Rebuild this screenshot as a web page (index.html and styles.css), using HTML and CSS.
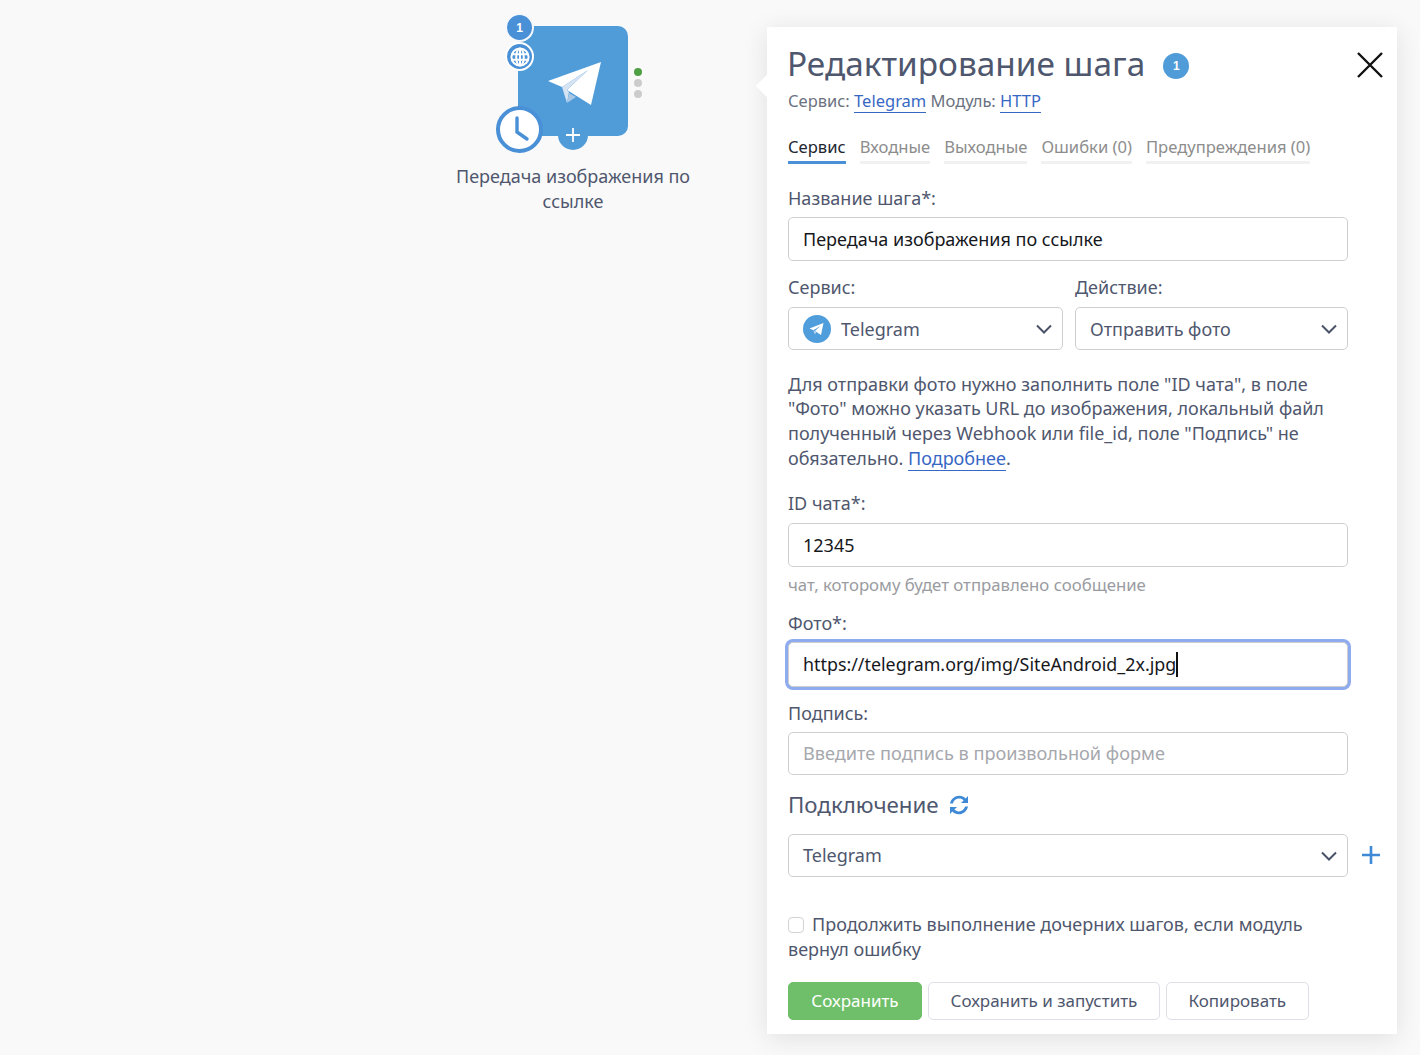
FILE: index.html
```html
<!DOCTYPE html>
<html lang="ru">

<head>
    <meta charset="utf-8">
    <meta name="viewport" content="width=device-width, initial-scale=1.0">
    <title>Редактирование шага</title>
    <link rel="stylesheet" href="styles.css">
</head>

<body>
    <!-- шаг на холсте -->
    <div class="node">
        <div class="node-box">
            <svg class="plane" viewBox="0 0 54 44">
                <path d="M53 0 L0 19 L14 25 L40 8 L19 28 L43 43 Z" fill="#fff" />
                <path d="M40 8 L14 25 L19 41 L21 30 L19 28 Z" fill="#d5e3f3" />
                <path d="M19 41 L21 31 L28 35 Z" fill="#a9c8e6" />
            </svg>
        </div>
        <span class="node-num">1</span>
        <span class="node-globe">
            <svg viewBox="0 0 20 20" width="20" height="20" fill="none" stroke="#fff" stroke-width="2">
                <circle cx="10" cy="10" r="8.6" />
                <ellipse cx="10" cy="10" rx="3.8" ry="8.6" />
                <path d="M10 1.4V18.6M1.8 7.2H18.2M1.8 12.8H18.2" />
            </svg>
        </span>
        <span class="node-clock">
            <svg viewBox="0 0 30 30" width="30" height="30" fill="none" stroke="#4a90d6" stroke-width="3.4" stroke-linecap="round">
                <path d="M12 3V17L22 24" />
            </svg>
        </span>
        <span class="node-add">
            <svg viewBox="0 0 14 14" width="14" height="14" stroke="#fff" stroke-width="1.8">
                <path d="M7 0V14M0 7H14" />
            </svg>
        </span>
        <div class="dots">
            <i class="dot green"></i>
            <i class="dot"></i>
            <i class="dot"></i>
        </div>
        <p class="node-name">Передача изображения по ссылке</p>
    </div>

    <!-- панель редактирования -->
    <aside class="panel">
        <span class="arrow"></span>
        <button class="close" aria-label="Закрыть">
            <svg viewBox="0 0 26 26" width="26" height="26" stroke="#111" stroke-width="2.4">
                <path d="M1 1L25 25M25 1L1 25" />
            </svg>
        </button>

        <h1>Редактирование шага <span class="badge">1</span></h1>
        <p class="sub">Сервис: <a href="#">Telegram</a> Модуль: <a href="#">HTTP</a></p>

        <nav class="tabs">
            <span class="tab active">Сервис</span>
            <span class="tab">Входные</span>
            <span class="tab">Выходные</span>
            <span class="tab">Ошибки (0)</span>
            <span class="tab">Предупреждения (0)</span>
        </nav>

        <label class="label first">Название шага*:</label>
        <div class="field dark">Передача изображения по ссылке</div>

        <div class="cols">
            <div class="col-left">
                <label class="label">Сервис:</label>
                <div class="field select">
                    <svg class="tg" viewBox="0 0 28 28" width="28" height="28">
                        <circle cx="14" cy="14" r="14" fill="#4f9ddb" />
                        <path d="M20.5 8 L6.5 13.5 L10.5 15.2 L17.5 10.7 L12 16 L18 20 Z" fill="#fff" />
                        <path d="M10.5 15.2 L12 19.5 L13 17 Z" fill="#d5e3f3" />
                    </svg>
                    Telegram
                    <svg class="chevron" viewBox="0 0 16 10" width="16" height="10" fill="none" stroke="#4a5368" stroke-width="2">
                        <path d="M1 1.5L8 8.5L15 1.5" />
                    </svg>
                </div>
            </div>
            <div class="col-right">
                <label class="label">Действие:</label>
                <div class="field select">
                    Отправить фото
                    <svg class="chevron" viewBox="0 0 16 10" width="16" height="10" fill="none" stroke="#4a5368" stroke-width="2">
                        <path d="M1 1.5L8 8.5L15 1.5" />
                    </svg>
                </div>
            </div>
        </div>

        <p class="descr">Для отправки фото нужно заполнить поле "ID чата", в поле "Фото" можно указать URL до изображения, локальный файл полученный через Webhook или file_id, поле "Подпись" не обязательно. <a href="#">Подробнее</a>.</p>

        <label class="label chat">ID чата*:</label>
        <div class="field dark">12345</div>
        <p class="hint">чат, которому будет отправлено сообщение</p>

        <label class="label photo">Фото*:</label>
        <div class="field dark focus">https://telegram.org/img/SiteAndroid_2x.jpg<span class="caret"></span></div>

        <label class="label sign">Подпись:</label>
        <div class="field placeholder">Введите подпись в произвольной форме</div>

        <h2>Подключение
            <svg viewBox="0 0 22 22" width="22" height="22" fill="#3f8ad6">
                <path d="M2 9.5C3 4.8 6.8 1.7 11.2 1.7c2.6 0 4.8 1 6.5 2.7L20 2v7h-7l2.6-2.6c-1.2-1.2-2.7-1.8-4.4-1.8-3 0-5.5 1.9-6.3 4.9z" />
                <path d="M20 12.5c-1 4.7-4.8 7.8-9.2 7.8-2.6 0-4.8-1-6.5-2.7L2 20v-7h7l-2.6 2.6c1.2 1.2 2.7 1.8 4.4 1.8 3 0 5.5-1.9 6.3-4.9z" />
            </svg>
        </h2>
        <div class="conn">
            <div class="field select">
                Telegram
                <svg class="chevron" viewBox="0 0 16 10" width="16" height="10" fill="none" stroke="#4a5368" stroke-width="2">
                    <path d="M1 1.5L8 8.5L15 1.5" />
                </svg>
            </div>
            <svg class="conn-add" viewBox="0 0 18 18" width="18" height="18" stroke="#3f8ad6" stroke-width="2.6">
                <path d="M9 0V18M0 9H18" />
            </svg>
        </div>

        <p class="check"><span class="box"></span>Продолжить выполнение дочерних шагов, если модуль вернул ошибку</p>

        <div class="buttons">
            <button class="btn green-btn">Сохранить</button>
            <button class="btn">Сохранить и запустить</button>
            <button class="btn">Копировать</button>
        </div>
    </aside>
</body>

</html>
```

FILE: styles.css
```css
* {
    margin: 0;
    padding: 0;
    box-sizing: border-box;
}

html,
body {
    height: 1055px;
    overflow: hidden;
}

body {
    position: relative;
    background-color: #f9f9f9;
    font-family: "Noto Sans", sans-serif;
    font-size: 18px;
    color: #4f576e;
}

a {
    color: #3767c4;
    text-decoration: none;
    border-bottom: 1px solid #3767c4;
}

/* шаг на холсте */
.node {
    position: absolute;
    left: 448px;
    top: 0;
    width: 250px;
    height: 220px;
}

.node-box {
    position: absolute;
    left: 70px;
    top: 26px;
    width: 110px;
    height: 110px;
    background-color: #4f9cd9;
    border-radius: 10px;
}

.plane {
    position: absolute;
    left: 30px;
    top: 36px;
    width: 54px;
    height: 44px;
}

.node-num,
.node-globe,
.node-clock,
.node-add {
    position: absolute;
    display: flex;
    align-items: center;
    justify-content: center;
    border-radius: 50%;
}

.node-num {
    left: 57px;
    top: 13px;
    width: 29px;
    height: 29px;
    background-color: #4a90d6;
    border: 2px solid #f6f8fb;
    color: #fff;
    font: bold 12px "Liberation Sans", sans-serif;
}

.node-globe {
    left: 57px;
    top: 42px;
    width: 29px;
    height: 29px;
    background-color: #4a90d6;
    border: 2px solid #fff;
}

.node-clock {
    left: 48px;
    top: 106px;
    width: 47px;
    height: 47px;
    background-color: #fff;
    border: 4px solid #4a90d6;
}

.node-add {
    left: 110px;
    top: 120px;
    width: 30px;
    height: 30px;
    background-color: #4f9cd9;
}

.dots {
    position: absolute;
    left: 186px;
    top: 68px;
    display: flex;
    flex-direction: column;
    gap: 3px;
}

.dot {
    width: 8px;
    height: 8px;
    border-radius: 50%;
    background-color: #cccccc;
}

.dot.green {
    background-color: #4f9f45;
}

.node-name {
    position: absolute;
    left: 0;
    top: 164px;
    width: 250px;
    text-align: center;
    line-height: 24.7px;
}

/* панель */
.panel {
    position: absolute;
    left: 767px;
    top: 27px;
    width: 630px;
    height: 1007px;
    padding: 14px 0 0 21px;
    background-color: #fff;
    box-shadow: 0 4px 24px rgba(0, 0, 0, 0.1);
}

.arrow {
    position: absolute;
    left: -8px;
    top: 51px;
    width: 16px;
    height: 16px;
    background-color: #fff;
    transform: rotate(45deg);
}

.close {
    position: absolute;
    left: 590px;
    top: 25px;
    width: 26px;
    height: 26px;
    background: none;
    border: 0;
}

h1 {
    display: flex;
    align-items: center;
    margin-left: -1px;
    font-size: 33.4px;
    font-weight: 400;
    line-height: 44px;
}

.badge {
    display: flex;
    align-items: center;
    justify-content: center;
    width: 26px;
    height: 26px;
    margin: 6px 0 0 18px;
    border-radius: 50%;
    background-color: #4f9cd9;
    color: #fff;
    font: bold 12px "Liberation Sans", sans-serif;
}

.sub {
    margin-top: 4px;
    font-size: 16.5px;
    line-height: 24px;
    color: #6b7280;
}

.tabs {
    display: flex;
    gap: 14px;
    margin-top: 21px;
}

.tab {
    height: 30px;
    padding-top: 1px;
    border-bottom: 3px solid #f1f1f1;
    font-size: 16.6px;
    line-height: 24px;
    color: #8d8d8d;
}

.tab.active {
    border-bottom-color: #4a90d6;
    color: #22262e;
}

.label {
    display: block;
    height: 24px;
    margin: 14px 0 8px;
    line-height: 24px;
}

.label.first {
    margin-top: 22px;
    margin-bottom: 7px;
}

.label.chat {
    margin-top: 20.5px;
    margin-bottom: 8px;
}

.label.photo {
    margin-top: 14px;
    margin-bottom: 7px;
}

.label.sign {
    margin-top: 14px;
    margin-bottom: 7px;
}

.field {
    display: flex;
    align-items: center;
    width: 560px;
    height: 44px;
    padding: 0 14px;
    background-color: #fff;
    border: 1px solid #cfcfcf;
    border-radius: 5px;
}

.field.dark {
    color: #16181d;
}

.field.placeholder {
    height: 43px;
    font-size: 18.15px;
    color: #a6a8ad;
}

.field.focus {
    height: 45px;
    margin-bottom: 1px;
    border: 1px solid #cfcfcf;
    box-shadow: 0 0 0 3px #8dabee;
    font-size: 17.85px;
}

.caret {
    width: 2px;
    height: 25px;
    background-color: #111;
}

.select {
    position: relative;
    height: 43px;
}

.chevron {
    position: absolute;
    right: 10px;
    top: 16px;
}

.tg {
    margin-right: 10px;
}

.cols {
    display: flex;
    gap: 12px;
    width: 560px;
}

.col-left {
    width: 275px;
}

.col-right {
    width: 273px;
}

.cols .field {
    width: 100%;
}

.descr {
    width: 560px;
    margin-top: 21.5px;
    line-height: 24.7px;
}

.hint {
    margin-top: 6px;
    font-size: 16.75px;
    line-height: 24px;
    color: #9a9ca1;
}

h2 {
    display: flex;
    align-items: center;
    gap: 9px;
    margin-top: 14px;
    font-size: 22.3px;
    font-weight: 400;
    line-height: 32px;
}

.conn {
    display: flex;
    align-items: center;
    gap: 14px;
    margin-top: 13px;
}

.check {
    width: 560px;
    margin-top: 35px;
    line-height: 25px;
}

.box {
    display: inline-block;
    width: 16px;
    height: 16px;
    margin-right: 8px;
    vertical-align: -2px;
    border: 1px solid #d3d3d3;
    border-radius: 4px;
}

.buttons {
    display: flex;
    gap: 6px;
    margin-top: 20px;
}

.btn {
    height: 38px;
    padding: 0 21.5px;
    background-color: #fff;
    border: 1px solid #dfe0e6;
    border-radius: 5px;
    font-family: "Noto Sans", sans-serif;
    font-size: 17px;
    color: #4f576e;
}

.green-btn {
    width: 134px;
    background-color: #6fbf6a;
    border-color: #6fbf6a;
    color: #fff;
}
```
